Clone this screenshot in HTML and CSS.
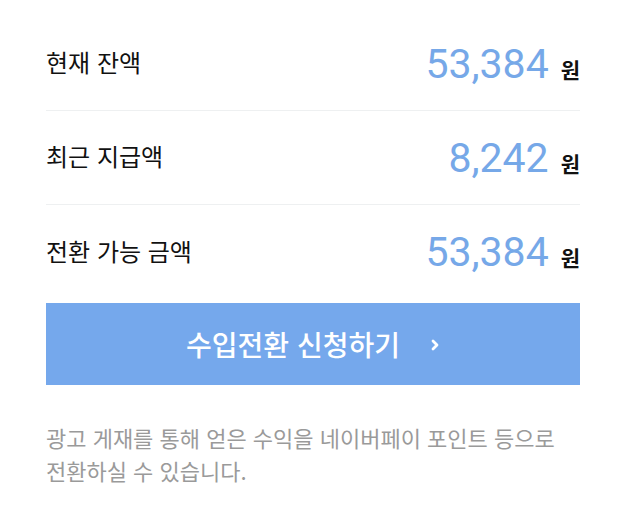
FILE: index.html
```html
<!DOCTYPE html>
<html lang="ko">
<head>
  <meta charset="UTF-8" />
  <meta name="viewport" content="width=device-width, initial-scale=1" />
  <title>수익 전환</title>
  <link rel="stylesheet" href="styles.css">
</head>
<body>

  <div class="container">
    <div class="row">
      <span class="label">현재 잔액</span>
      <span class="value"><span class="amount">53,384</span><span class="unit">원</span></span>
    </div>
    <div class="row">
      <span class="label">최근 지급액</span>
      <span class="value"><span class="amount">8,242</span><span class="unit">원</span></span>
    </div>
    <div class="row last">
      <span class="label">전환 가능 금액</span>
      <span class="value"><span class="amount">53,384</span><span class="unit">원</span></span>
    </div>

    <button class="apply">
      수입전환 신청하기
      <svg class="chevron" width="10" height="14" viewBox="0 0 10 14">
        <path d="M3 3 L7 7 L3 11" fill="none" stroke="#fff" stroke-width="2.8" stroke-linecap="round" stroke-linejoin="round"/>
      </svg>
    </button>

    <p class="note">광고 게재를 통해 얻은 수익을 네이버페이 포인트 등으로 전환하실 수 있습니다.</p>
  </div>

</body>
</html>
```

FILE: styles.css
```css
* {
  box-sizing: border-box;
}

body {
  margin: 0;
  background: #fff;
  font-family: "Noto Sans CJK KR", "Noto Sans", sans-serif;
  color: #111;
}

.container {
  width: 534px;
  margin: 0 0 0 46px;
  padding-top: 17px;
}

.row {
  display: flex;
  justify-content: space-between;
  align-items: center;
  height: 94px;
  border-bottom: 1px solid #eef0f1;
}

.row.last {
  border-bottom: none;
}

.label {
  font-size: 24px;
  font-weight: 400;
  margin-top: -4px;
}

.value {
  display: flex;
  align-items: baseline;
}

.amount {
  font-family: Roboto, sans-serif;
  font-size: 41px;
  color: #76a8e8;
}

.unit {
  font-size: 21px;
  font-weight: 700;
  margin-left: 12px;
}

.apply {
  display: flex;
  justify-content: center;
  align-items: center;
  width: 100%;
  height: 82px;
  margin-top: 4px;
  border: none;
  background: #75a8ec;
  color: #fff;
  font-family: inherit;
  font-size: 28px;
  font-weight: 500;
  cursor: pointer;
}

.chevron {
  margin-left: 30px;
  margin-top: 2px;
}

.note {
  margin: 36px 0 0;
  font-size: 22px;
  line-height: 33px;
  color: #9a9a9a;
  word-break: keep-all;
}
```
